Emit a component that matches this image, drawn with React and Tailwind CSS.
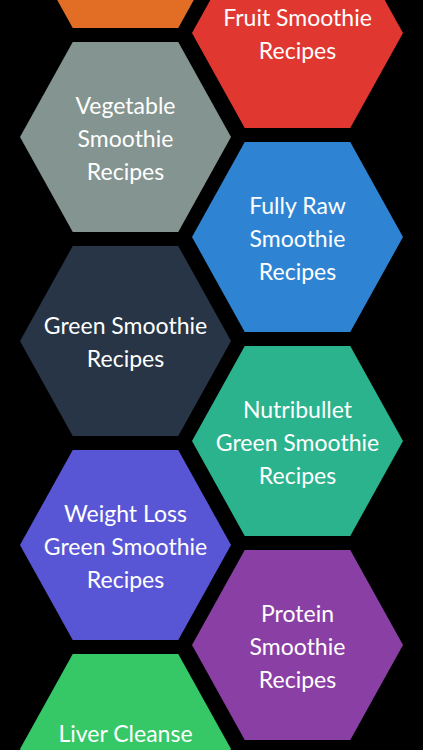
import React from 'react';

const leftCol = [
  { label: [], color: 'bg-[#e26d24]' },
  { label: ['Vegetable', 'Smoothie', 'Recipes'], color: 'bg-[#849490]' },
  { label: ['Green Smoothie', 'Recipes'], color: 'bg-[#273546]' },
  { label: ['Weight Loss', 'Green Smoothie', 'Recipes'], color: 'bg-[#5956d6]' },
  { label: ['Liver Cleanse', 'Recipes'], color: 'bg-[#36c867]' },
];

const rightCol = [
  { label: ['Fruit Smoothie', 'Recipes'], color: 'bg-[#e13731]' },
  { label: ['Fully Raw', 'Smoothie', 'Recipes'], color: 'bg-[#2e84d3]' },
  { label: ['Nutribullet', 'Green Smoothie', 'Recipes'], color: 'bg-[#2ab38d]' },
  { label: ['Protein', 'Smoothie', 'Recipes'], color: 'bg-[#8a3fa4]' },
];

const Hex = ({ label, color }) => (
  <div
    className={`${color} w-[211px] h-[190px] shrink-0 flex flex-col items-center justify-center text-white text-[23px] leading-[33px] pt-[2px] [clip-path:polygon(25%_0,75%_0,100%_50%,75%_100%,25%_100%,0_50%)]`}
    style={{ fontFamily: 'Lato, "Open Sans", sans-serif' }}
  >
    {label.map((l) => (
      <span key={l} className="whitespace-nowrap">{l}</span>
    ))}
  </div>
);

const App = () => {
  return (
    <div className="w-[423px] h-[750px] bg-black overflow-hidden flex items-start">
      <div className="flex flex-col gap-[14px] ml-[20px] mt-[-162px]">
        {leftCol.map((h, i) => (
          <Hex key={i} {...h} />
        ))}
      </div>
      <div className="flex flex-col gap-[14px] ml-[-39px] mt-[-62px]">
        {rightCol.map((h, i) => (
          <Hex key={i} {...h} />
        ))}
      </div>
    </div>
  );
};

export default App;
